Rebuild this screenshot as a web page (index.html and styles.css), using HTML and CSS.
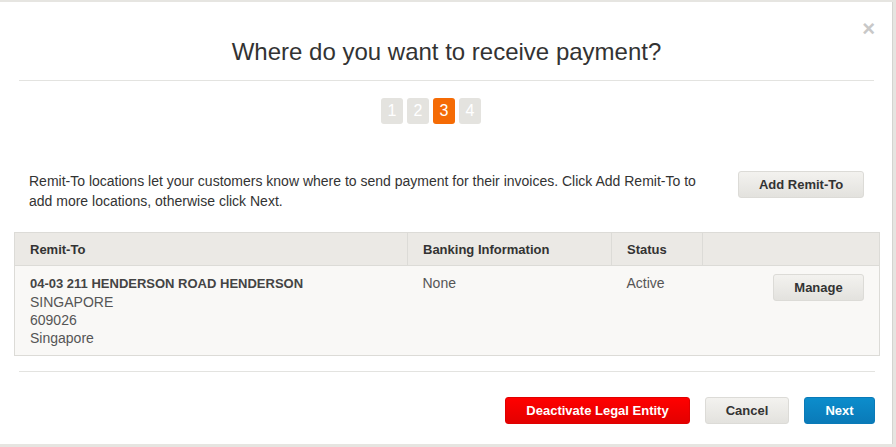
FILE: index.html
```html
<!DOCTYPE html>
<html>
<head>
<meta charset="utf-8">
<link rel="stylesheet" href="styles.css">
</head>
<body>
<div class="modal">
  <div class="close">&#215;</div>
  <h1 class="title">Where do you want to receive payment?</h1>
  <div class="steps">
    <span class="step">1</span>
    <span class="step">2</span>
    <span class="step active">3</span>
    <span class="step">4</span>
  </div>
  <div class="intro">
    <p>Remit-To locations let your customers know where to send payment for their invoices. Click Add Remit-To to add more locations, otherwise click Next.</p>
    <button class="btn btn-light add">Add Remit-To</button>
  </div>
  <table class="grid">
    <thead>
      <tr>
        <th class="c1">Remit-To</th>
        <th class="c2">Banking Information</th>
        <th class="c3">Status</th>
        <th class="c4"></th>
      </tr>
    </thead>
    <tbody>
      <tr>
        <td class="c1"><strong>04-03 211 HENDERSON ROAD HENDERSON</strong><br>SINGAPORE<br>609026<br>Singapore</td>
        <td class="c2">None</td>
        <td class="c3">Active</td>
        <td class="c4"><button class="btn btn-light manage">Manage</button></td>
      </tr>
    </tbody>
  </table>
  <div class="footer">
    <button class="btn btn-red">Deactivate Legal Entity</button>
    <button class="btn btn-light cancel">Cancel</button>
    <button class="btn btn-blue">Next</button>
  </div>
</div>
</body>
</html>
```
FILE: styles.css
```css
html, body {
  margin: 0;
  padding: 0;
  background: #e6e5e1;
  font-family: "Liberation Sans", Arial, sans-serif;
  color: #333;
  height: 447px;
  overflow: hidden;
}
.modal {
  position: relative;
  margin-top: 2px;
  width: 893px;
  height: 442px;
  background: #fff;
  border-right: 1px solid #d4d4d0;
  box-sizing: border-box;
  padding: 0 19px 0 19px;
}
.close {
  position: absolute;
  right: 17px;
  top: 15px;
  font-size: 22px;
  color: #c8c8c8;
  font-weight: bold;
  line-height: 24px;
}
.title {
  margin: 0;
  padding-top: 36px;
  height: 42px;
  font-size: 24px;
  font-weight: normal;
  text-align: center;
  line-height: 28px;
  color: #333;
  border-bottom: 1px solid #e3e3e0;
  margin-right: -1px;
}
.steps {
  display: flex;
  justify-content: center;
  gap: 4px;
  margin-top: 17px;
  padding-right: 30px;
}
.step {
  width: 22px;
  height: 26px;
  border-radius: 3px;
  background: #e4e3df;
  color: #fff;
  font-size: 16px;
  line-height: 26px;
  text-align: center;
}
.step.active {
  background: #f56b05;
}
.intro {
  display: flex;
  justify-content: space-between;
  align-items: flex-start;
  margin-top: 47px;
  padding-left: 10px;
  padding-right: 9px;
}
.intro p {
  margin: 0;
  width: 690px;
  font-size: 14px;
  line-height: 20px;
}
.btn {
  font-family: "Liberation Sans", Arial, sans-serif;
  font-size: 13px;
  font-weight: bold;
  height: 27px;
  border-radius: 3px;
  border: 1px solid #dcdbd7;
  padding: 0 10px;
  cursor: pointer;
}
.btn-light {
  background: linear-gradient(#f3f2ef, #e3e2de);
  color: #333;
}
.add {
  width: 126px;
  margin-top: 0;
}
.grid {
  margin: 21px 0 0 -5px;
  width: 866px;
  border-collapse: collapse;
  font-size: 14px;
}
.grid th {
  background: #ebe9e5;
  text-align: left;
  font-size: 13px;
  font-weight: bold;
  height: 32px;
  padding: 0 15px;
  border: 1px solid #dcdbd7;
  color: #333;
}
.grid td {
  background: #f9f8f6;
  vertical-align: top;
  padding: 8px 15px 8px;
  line-height: 18px;
  color: #555;
  border-top: 1px solid #dcdbd7;
  border-bottom: 1px solid #dcdbd7;
}
.grid td:first-child { border-left: 1px solid #dcdbd7; }
.grid td:last-child { border-right: 1px solid #dcdbd7; }
.grid td strong { color: #444; font-size: 13px; }
.c1 { width: 362px; }
.c2 { width: 173px; }
.c3 { width: 60px; }
.grid td.c4 {
  text-align: right;
  padding-right: 15px;
}
.manage {
  width: 91px;
}
.footer {
  border-top: 1px solid #e3e3e0;
  margin-top: 15px;
  display: flex;
  justify-content: flex-end;
  gap: 15px;
  padding-top: 25px;
  margin-right: -2px;
  padding-right: 0;
}
.btn-red {
  background: linear-gradient(#ff0000, #e30000);
  border-color: #e00000;
  color: #fff;
  width: 185px;
}
.cancel {
  width: 84px;
}
.btn-blue {
  background: linear-gradient(#0c8dcc, #0a7ab8);
  border-color: #0a7ab8;
  color: #fff;
  width: 71px;
}
```
